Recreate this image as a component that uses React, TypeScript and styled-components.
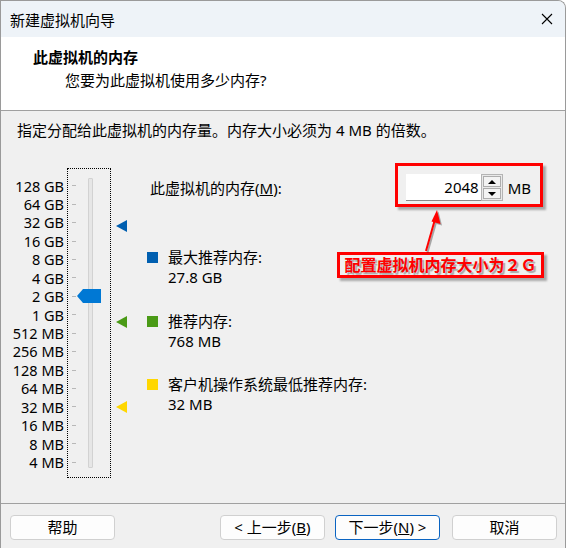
import React from "react";
import styled, { createGlobalStyle } from "styled-components";

const GlobalStyle = createGlobalStyle`
  html, body { margin: 0; padding: 0; background: #ffffff; }
  body {
    font-family: "Noto Sans", "Noto Sans CJK SC", sans-serif;
    font-size: 15px;
    color: #000;
  }
  * { box-sizing: border-box; }
`;

const ROW = 18.44;
const LABELS = [
  "128 GB", "64 GB", "32 GB", "16 GB", "8 GB", "4 GB", "2 GB", "1 GB",
  "512 MB", "256 MB", "128 MB", "64 MB", "32 MB", "16 MB", "8 MB", "4 MB",
];
const idxOf = (mb: number) => 17 - Math.log2(mb);

const Window = styled.div`
  width: 566px;
  height: 548px;
  border: 1px solid #9a9a9a;
  border-bottom: none;
  border-top-right-radius: 8px;
  background: #f0f0f0;
  display: flex;
  flex-direction: column;
  position: relative;
  overflow: hidden;
`;

const TitleBar = styled.div`
  height: 36px;
  flex: none;
  background: #eef3f8;
  display: flex;
  align-items: center;
  justify-content: space-between;
  padding: 0 11px 0 9px;
  font-size: 15px;
`;

const CloseBtn = styled.span`
  display: flex;
  align-items: center;
  justify-content: center;
  width: 14px;
  height: 14px;
`;

const Header = styled.div`
  height: 74px;
  flex: none;
  background: #ffffff;
  border-bottom: 1px solid #a0a0a0;
  padding: 10px 0 0 32px;
  display: flex;
  flex-direction: column;
  gap: 2px;
`;

const HeaderTitle = styled.div`
  font-weight: 700;
  line-height: 21px;
`;

const HeaderSub = styled.div`
  line-height: 21px;
  padding-left: 32px;
`;

const Body = styled.div`
  flex: 1;
  padding: 9px 0 0 16px;
  display: flex;
  flex-direction: column;
`;

const Instruction = styled.div`
  line-height: 20px;
`;

const MainRow = styled.div`
  margin-top: 28px;
  display: flex;
  align-items: flex-start;
`;

const ScaleLabels = styled.div`
  width: 47px;
  padding-top: 8.5px;
  display: flex;
  flex-direction: column;
  align-items: flex-end;
`;

const ScaleLabel = styled.div`
  height: ${ROW}px;
  line-height: ${ROW}px;
  font-size: 14.5px;
  white-space: nowrap;
`;

const SliderBox = styled.div`
  margin-left: 3px;
  width: 44px;
  height: 310px;
  border: 1px dotted #000;
  position: relative;
`;

const Tick = styled.div`
  position: absolute;
  left: 4px;
  width: 4px;
  height: 1px;
  background: #b8b8b8;
`;

const Track = styled.div`
  position: absolute;
  left: 20px;
  top: 9px;
  width: 5px;
  height: 290px;
  background: #e6e6e6;
  border: 1px solid #d2d2d2;
  border-radius: 1px;
`;

const Thumb = styled.svg`
  position: absolute;
  left: 9px;
  width: 24px;
  height: 14px;
`;

const MarkerColumn = styled.div`
  margin-left: 5px;
  width: 11px;
  height: 310px;
  position: relative;
`;

const Marker = styled.svg`
  position: absolute;
  left: 0;
  width: 11px;
  height: 12px;
`;

const RightPanel = styled.div`
  flex: 1;
  margin-left: 20px;
  padding-right: 34px;
  display: flex;
  flex-direction: column;
`;

const MemoryRow = styled.div`
  margin-top: 6px;
  height: 27px;
  display: flex;
  align-items: center;
  padding-left: 3px;
`;

const InputGroup = styled.div`
  margin-left: auto;
  display: flex;
  align-items: center;
`;

const NumberBox = styled.div`
  width: 75px;
  height: 27px;
  background: #ffffff;
  border-bottom: 1px solid #8a8a8a;
  text-align: right;
  padding-right: 2px;
  line-height: 26px;
`;

const Spin = styled.div`
  width: 22px;
  height: 27px;
  display: flex;
  flex-direction: column;
  border: 1px solid #b4b4b4;
  background: #e9e9e9;
  padding: 1px;
  gap: 1px;
`;

const SpinBtn = styled.div`
  flex: 1;
  background: #f3f3f3;
  border: 1px solid #adadad;
  display: flex;
  align-items: center;
  justify-content: center;
`;

const Arrow = styled.span<{ $up?: boolean }>`
  width: 0;
  height: 0;
  border-left: 4px solid transparent;
  border-right: 4px solid transparent;
  ${(p) => (p.$up ? "border-bottom: 4px solid #000;" : "border-top: 4px solid #000;")}
`;

const Unit = styled.span`
  margin-left: 5px;
`;

const Legend = styled.div`
  margin-top: 46px;
  display: flex;
  flex-direction: column;
  gap: 23.5px;
`;

const LegendItem = styled.div`
  display: flex;
  align-items: flex-start;
`;

const Swatch = styled.span<{ $color: string }>`
  width: 11px;
  height: 11px;
  margin-top: 5px;
  background: ${(p) => p.$color};
  flex: none;
`;

const LegendText = styled.div`
  margin-left: 10px;
  line-height: 20px;
`;

const Footer = styled.div`
  height: 45px;
  flex: none;
  border-top: 1px solid #a0a0a0;
  padding: 11px 8px 0 9px;
  display: flex;
  align-items: flex-start;
`;

const Button = styled.div<{ $focused?: boolean; $gap?: number }>`
  width: 105px;
  height: 25px;
  margin-left: ${(p) => p.$gap ?? 0}px;
  background: #fdfdfd;
  border: 1px solid ${(p) => (p.$focused ? "#0a64c2" : "#d0d0d0")};
  border-radius: 4px;
  display: flex;
  align-items: center;
  justify-content: center;
  font-size: 15px;
  line-height: 1;
`;

const Spacer = styled.div`
  flex: 1;
`;

const Overlay = styled.div`
  position: absolute;
  left: -1px;
  top: -1px;
  width: 566px;
  height: 548px;
  pointer-events: none;
`;

const RedBox = styled.div<{ $x: number; $y: number; $w: number; $h: number }>`
  position: absolute;
  left: ${(p) => p.$x}px;
  top: ${(p) => p.$y}px;
  width: ${(p) => p.$w}px;
  height: ${(p) => p.$h}px;
  border: 3px solid #ff0000;
  box-shadow: 3px 3px 2px rgba(0, 0, 0, 0.3);
  display: flex;
  align-items: center;
  justify-content: center;
`;

const NoteText = styled.span`
  color: #ff0000;
  font-weight: 700;
  font-size: 16px;
  line-height: 1;
  white-space: nowrap;
  text-shadow: 2px 2px 1px rgba(0, 0, 0, 0.3);
`;

const ArrowSvg = styled.svg`
  position: absolute;
  left: 0;
  top: 0;
`;

const markers = [
  { mb: 27.8 * 1024, color: "#005fb0" },
  { mb: 768, color: "#4a9a16" },
  { mb: 32, color: "#ffd700" },
];

export default function App() {
  const thumbCenter = 16.7 + idxOf(2048) * ROW;
  return (
    <>
      <GlobalStyle />
      <Window>
        <TitleBar>
          <span>新建虚拟机向导</span>
          <CloseBtn>
            <svg width="12" height="12" viewBox="0 0 12 12">
              <path d="M1 1 L11 11 M11 1 L1 11" stroke="#000" strokeWidth="1.1" />
            </svg>
          </CloseBtn>
        </TitleBar>
        <Header>
          <HeaderTitle>此虚拟机的内存</HeaderTitle>
          <HeaderSub>您要为此虚拟机使用多少内存?</HeaderSub>
        </Header>
        <Body>
          <Instruction>指定分配给此虚拟机的内存量。内存大小必须为 4 MB 的倍数。</Instruction>
          <MainRow>
            <ScaleLabels>
              {LABELS.map((l) => (
                <ScaleLabel key={l}>{l}</ScaleLabel>
              ))}
            </ScaleLabels>
            <SliderBox>
              {LABELS.map((l, i) => (
                <Tick key={l} style={{ top: 16.2 + i * ROW }} />
              ))}
              <Track />
              <Thumb viewBox="0 0 24 14" style={{ top: thumbCenter - 7 }}>
                <polygon points="0,7 6,0 24,0 24,14 6,14" fill="#0078d4" />
              </Thumb>
            </SliderBox>
            <MarkerColumn>
              {markers.map((m) => (
                <Marker
                  key={m.color}
                  viewBox="0 0 11 12"
                  style={{ top: 17.7 + idxOf(m.mb) * ROW - 6 }}
                >
                  <polygon points="0,6 11,0 11,12" fill={m.color} />
                </Marker>
              ))}
            </MarkerColumn>
            <RightPanel>
              <MemoryRow>
                <span>
                  此虚拟机的内存(<u>M</u>):
                </span>
                <InputGroup>
                  <NumberBox>2048</NumberBox>
                  <Spin>
                    <SpinBtn>
                      <Arrow $up />
                    </SpinBtn>
                    <SpinBtn>
                      <Arrow />
                    </SpinBtn>
                  </Spin>
                  <Unit>MB</Unit>
                </InputGroup>
              </MemoryRow>
              <Legend>
                <LegendItem>
                  <Swatch $color="#005fb0" />
                  <LegendText>
                    最大推荐内存:
                    <br />
                    27.8 GB
                  </LegendText>
                </LegendItem>
                <LegendItem>
                  <Swatch $color="#4a9a16" />
                  <LegendText>
                    推荐内存:
                    <br />
                    768 MB
                  </LegendText>
                </LegendItem>
                <LegendItem>
                  <Swatch $color="#ffd700" />
                  <LegendText>
                    客户机操作系统最低推荐内存:
                    <br />
                    32 MB
                  </LegendText>
                </LegendItem>
              </Legend>
            </RightPanel>
          </MainRow>
        </Body>
        <Footer>
          <Button>帮助</Button>
          <Spacer />
          <Button>
            &lt; 上一步(<u>B</u>)
          </Button>
          <Button $focused $gap={10}>
            下一步(<u>N</u>) &gt;
          </Button>
          <Button $gap={12}>取消</Button>
        </Footer>
        <Overlay>
          <RedBox $x={395} $y={163} $w={148} $h={44} />
          <RedBox $x={337} $y={252} $w={207} $h={26}>
            <NoteText>配置虚拟机内存大小为２Ｇ</NoteText>
          </RedBox>
          <ArrowSvg width="566" height="548" viewBox="0 0 566 548">
            <g transform="translate(1.5,1.5)" opacity="0.3">
              <line x1="426" y1="251" x2="434.8" y2="220" stroke="#000" strokeWidth="2" />
              <polygon points="437,210 440.5,224 431.5,221.5" fill="#000" />
            </g>
            <line x1="426" y1="251" x2="434.8" y2="220" stroke="#ff0000" strokeWidth="2" />
            <polygon points="437,210 440.5,224 431.5,221.5" fill="#ff0000" />
          </ArrowSvg>
        </Overlay>
      </Window>
    </>
  );
}
